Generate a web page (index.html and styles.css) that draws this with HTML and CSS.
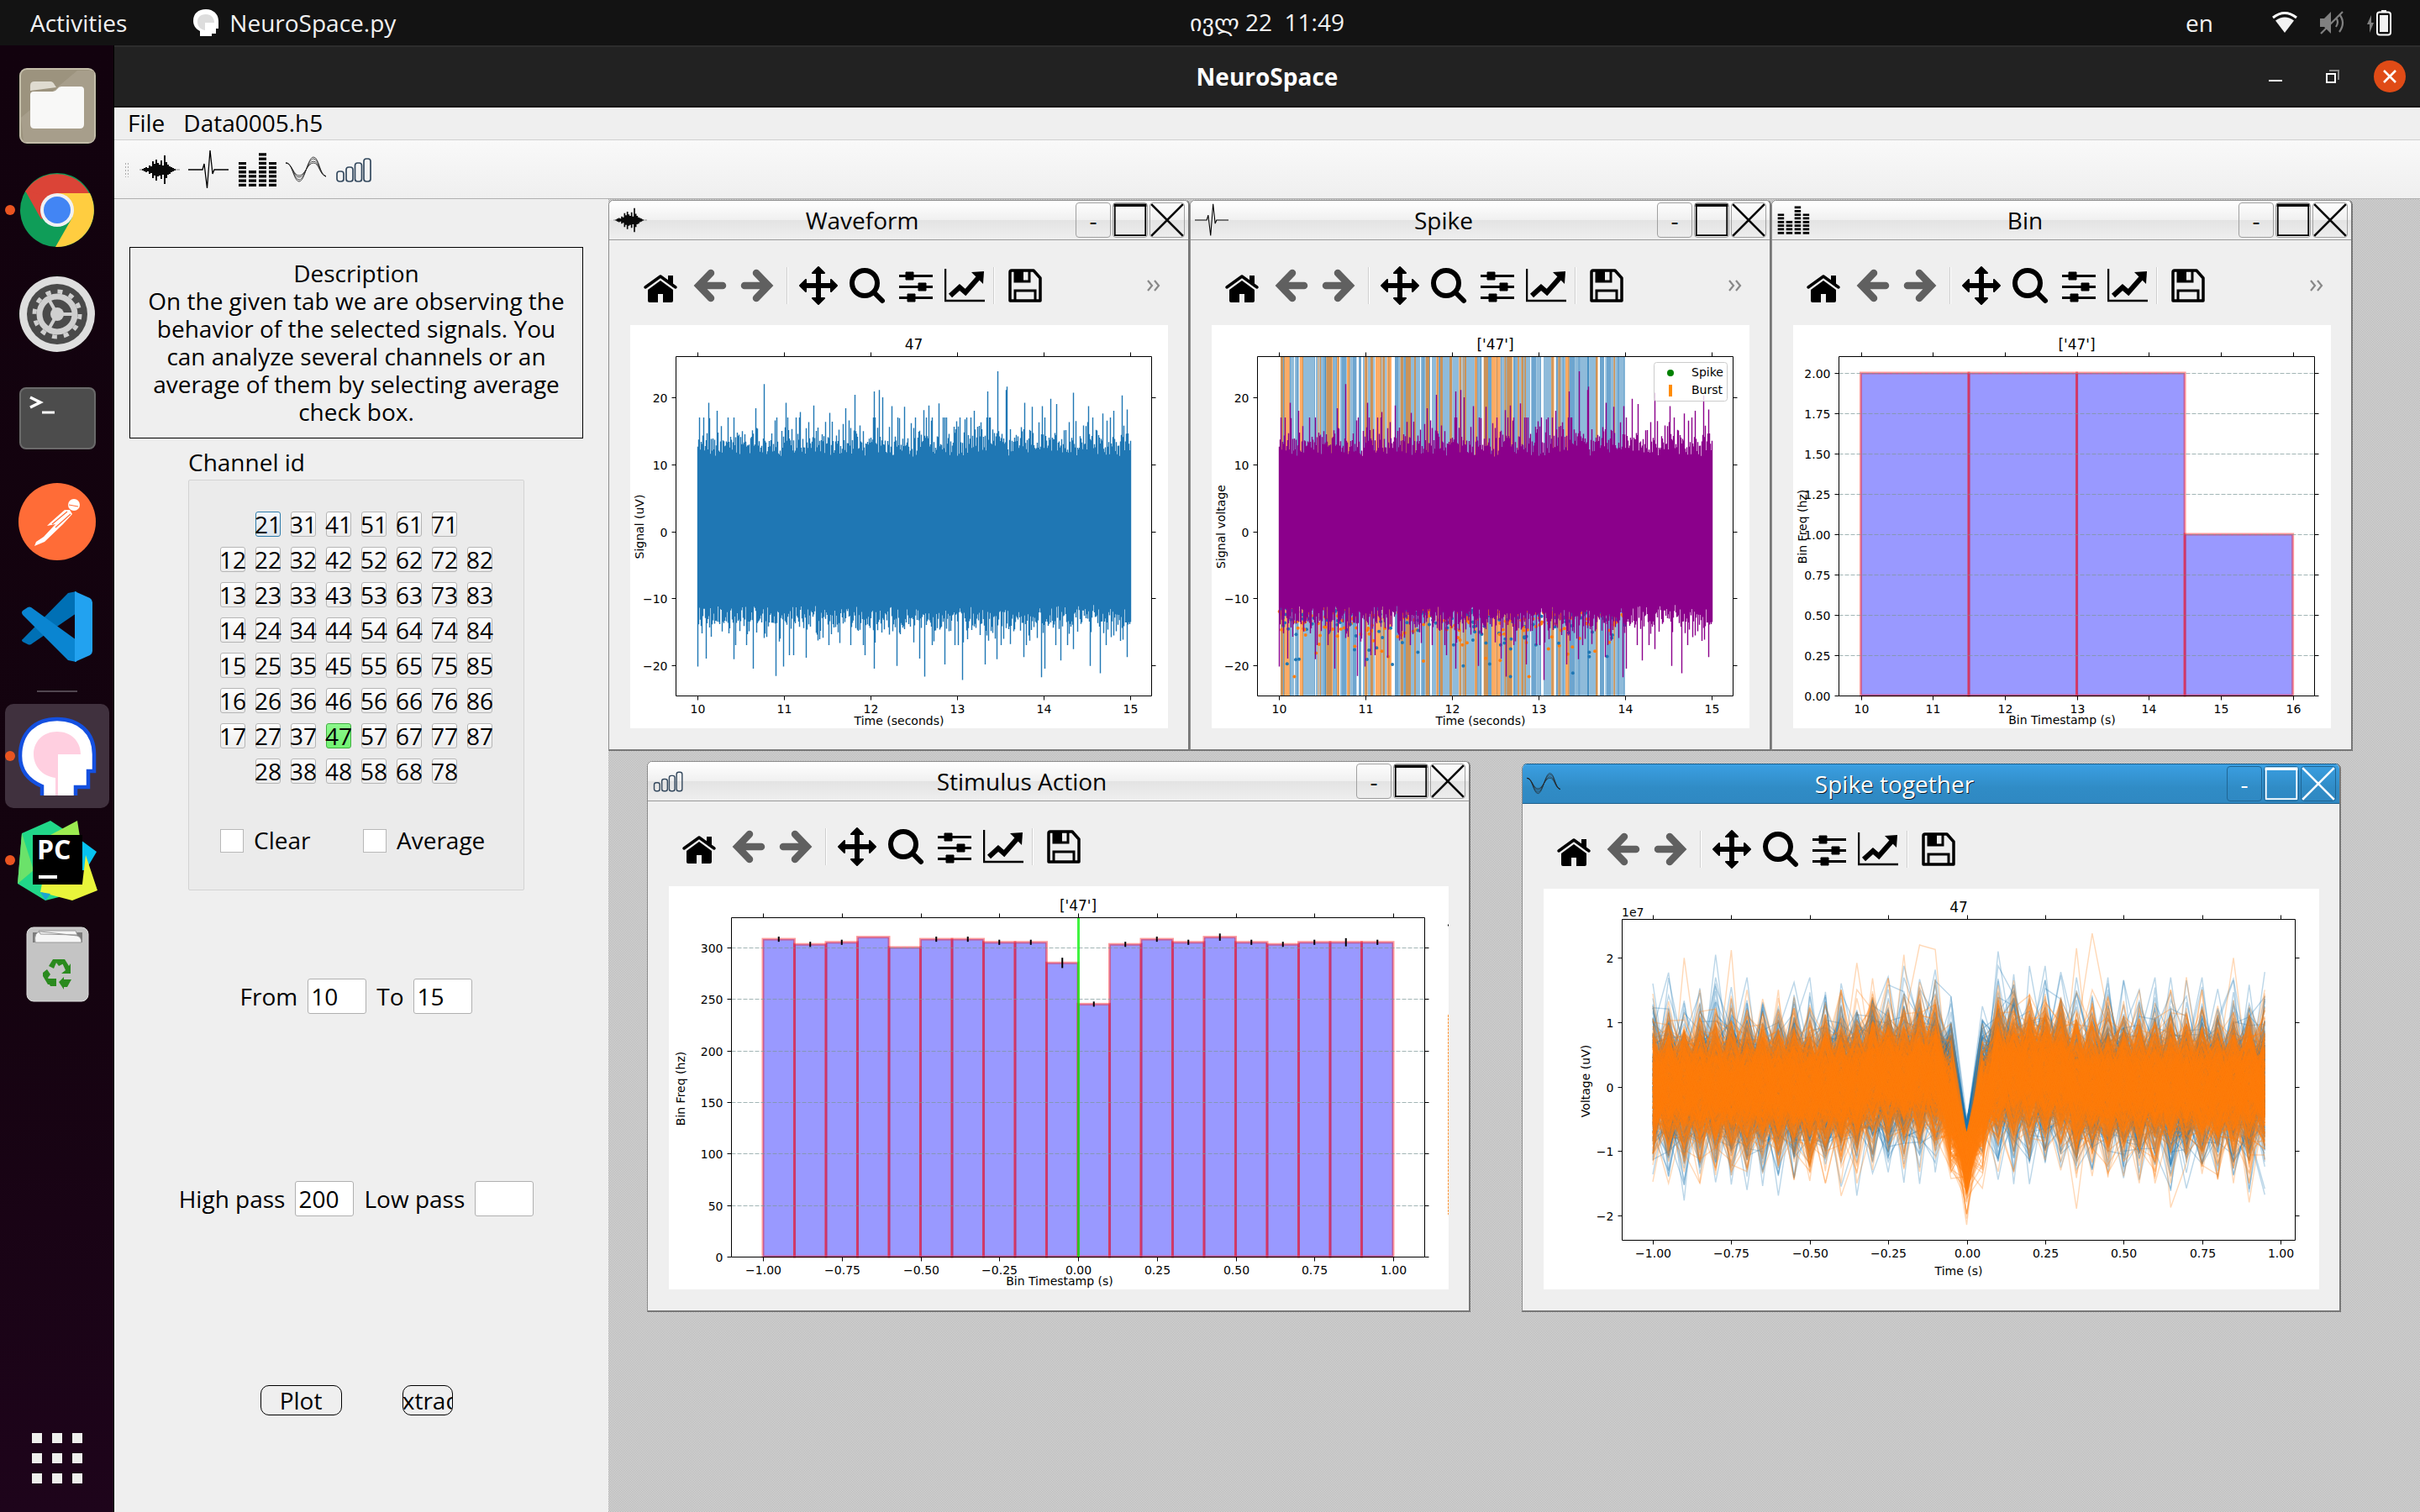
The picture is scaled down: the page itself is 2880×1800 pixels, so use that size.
FILE: index.html
```html
<!DOCTYPE html>
<html lang="en">
<head>
<meta charset="utf-8">
<title>NeuroSpace</title>
<link rel="stylesheet" href="styles.css">
</head>
<body>
<svg class="defs" aria-hidden="true">
  <symbol id="i-wave" viewBox="0 0 48 48"><path d="M0 24H48" stroke="#888" stroke-width="1"/><path d="M4 23v2M6 22v4M8 21v6M10 22v4M12 19v10M14 20v8M16 14v20M18 17v14M20 12v25M22 16v16M24 18v13M26 13v22M28 19v11M30 7v34M32 15v19M34 18v12M36 20v9M38 21v6M40 22v4M42 23v2" stroke="#0a0a0a" stroke-width="2"/></symbol>
  <symbol id="i-spike" viewBox="0 0 48 48"><path d="M0 24H17L19 17 22.500 46 26 1 29 29 31 24H48" fill="none" stroke="#000" stroke-width="1.300"/></symbol>
  <symbol id="i-bars" viewBox="0 0 48 48"><g stroke="#000" stroke-width="9" stroke-dasharray="3.300 1.900"><path d="M6.500 44V15"/><path d="M18.500 44V25"/><path d="M30.500 44V4"/><path d="M42.500 44V15"/></g></symbol>
  <symbol id="i-curves" viewBox="0 0 48 48"><g fill="none" stroke="#222" stroke-width=".8"><path d="M0 16C8 14 9 38 16 38S26 9 33 9 40 30 48 32"/><path d="M0 16C8 15 9 36 16 36S26 11 33 11 40 30 48 32"/><path d="M0 16C8 16 9 33 16 33S26 14 33 14 40 30 48 32"/><path d="M0 16C8 17 9 31 16 31S26 16 33 16 40 30 48 32"/></g></symbol>
  <symbol id="i-signal" viewBox="0 0 48 48"><g fill="none" stroke="#34495e" stroke-width="1.700"><rect x="3" y="26" width="8" height="12" rx="3"/><rect x="14" y="21" width="8" height="17" rx="3"/><rect x="24.500" y="16" width="8" height="22" rx="3"/><rect x="35" y="11" width="8" height="27" rx="3"/></g></symbol>
  <symbol id="i-home" viewBox="0 0 48 48"><path d="M33 12h6v14l-6-5z"/><path d="M6 26 24 13 42 26" fill="none" stroke="#000" stroke-width="3.500" stroke-linecap="round" stroke-linejoin="round"/><path d="M9 29 24 18 39 29V42q0 2-2 2H27V34H21V44H11q-2 0-2-2z"/></symbol>
  <symbol id="i-back" viewBox="0 0 48 48"><path d="M26 9 11.500 24 26 39M13 24H40" fill="none" stroke="#606060" stroke-width="8.500" stroke-linecap="round" stroke-linejoin="miter"/></symbol>
  <symbol id="i-forward" viewBox="0 0 48 48"><path d="M22 9 36.500 24 22 39M35 24H8" fill="none" stroke="#606060" stroke-width="8.500" stroke-linecap="round" stroke-linejoin="miter"/></symbol>
  <symbol id="i-move" viewBox="0 0 48 48"><path d="M8 24H40M24 8V40" stroke="#000" stroke-width="6"/><path d="M2 24 9 17V31zM46 24 39 17V31zM24 2 17 9H31zM24 46 17 39H31z" stroke="#000" stroke-width="2" stroke-linejoin="round"/></symbol>
  <symbol id="i-zoom" viewBox="0 0 48 48"><g fill="none" stroke="#000" stroke-width="6" stroke-linecap="round"><circle cx="21" cy="21" r="15"/><path d="M33 33 42 42"/></g></symbol>
  <symbol id="i-sliders" viewBox="0 0 48 48"><path d="M4 12.500H44M4 25.500H44M4 38.500H44" stroke="#000" stroke-width="3"/><path d="M12 8h9v9h-9zM27 21h9v9h-9zM14 34h9v9h-9z" stroke="#000" stroke-width="1"/></symbol>
  <symbol id="i-chart" viewBox="0 0 48 48"><path d="M1 4V42H48" fill="none" stroke="#000" stroke-width="2.500"/><path d="M7 36 18 26 25 32 40 15" fill="none" stroke="#000" stroke-width="6"/><path d="M32 8 47 7 46 22z"/></symbol>
  <symbol id="i-save" viewBox="0 0 48 48"><path d="M8 6H34L42 15V42H6V8q0-2 2-2z" fill="none" stroke="#000" stroke-width="3.500" stroke-linejoin="round"/><path d="M12 6V19H29V6M12 42V30H36V42" fill="none" stroke="#000" stroke-width="3"/><path d="M12 6h10v13h-10z"/></symbol>
  <symbol id="i-more" viewBox="0 0 18 14"><path d="M2 1 7 7 2 13M10 1 15 7 10 13" fill="none" stroke="#888" stroke-width="2.200"/></symbol>
  <symbol id="i-max" viewBox="0 0 34 34"><path d="M1.500 2V32.500H32.500V2" fill="none" stroke="currentColor" stroke-width="1.500"/><path d="M.5 2H33.500" stroke="currentColor" stroke-width="3"/></symbol>
  <symbol id="i-close" viewBox="0 0 34 34"><path d="M1 1 33 33M33 1 1 33" stroke="currentColor" stroke-width="2.200"/></symbol>
</svg>

<header class="topbar">
  <button class="activities">Activities</button>
  <button class="appmenu">
    <svg width="32" height="34" viewBox="0 0 32 34"><path d="M9 33V27C3 24 1 19 1 15 1 6 7 1 16 1S31 7 31 15V24H28V30H23V33z" fill="#fff"/><path d="M16 7C9 7 6 11 6 16S9 25 15 26V17H26C26 11 22 7 16 7z" fill="#ddd"/></svg>
    NeuroSpace.py</button>
  <time class="clock">ივლ 22&nbsp; 11:49</time>
  <div class="tray">
    <span>en</span>
    <svg class="wifi" width="32" height="28" viewBox="0 0 32 28"><path d="M2 8Q16-3 30 8" fill="none" stroke="#fff" stroke-width="3"/><path d="M5 11.500Q16 3.500 27 11.500L16 26z" fill="#f2f2f2"/></svg>
    <svg class="volume" width="30" height="30" viewBox="0 0 30 30"><g fill="none" stroke="#808080" stroke-width="2.200"><path d="M20 9Q24 14 20 20M24 5Q32 15 24 26M2 28 28 2"/></g><path d="M1 10H6L14 2V28L6 20H1z" fill="#808080"/></svg>
    <svg class="battery" width="30" height="32" viewBox="0 0 30 32"><path d="M6 7 1 18H4V28L9 16H6z" fill="#808080"/><rect x="13" y="3.500" width="16" height="27" rx="3" fill="none" stroke="#fff" stroke-width="2"/><path d="M18 1h6v2h-6zM16 7h10v20h-10z" fill="#f2f2f2"/></svg>
  </div>
</header>

<div class="screen">
<nav class="dock" aria-label="Dock">
  <button class="launcher" aria-label="Files"><svg width="96" height="96" viewBox="0 0 96 96"><rect x="4" y="4" width="89" height="88" rx="8" fill="#9c937e" stroke="#c3bda9" stroke-width="2"/><path d="M92 6V85q0 6-6 6H8L5 62 72 6z" fill="#a79e8b"/><path d="M16 30V24q0-5 5-5H40q3 0 5 4l2 3z" fill="#dfdbd0"/><path d="M16 35q0-4 4-4H43q3 0 5-3t5-3H76q4 0 4 4V70q0 5-5 5H21q-5 0-5-5z" fill="#f8f8f7"/></svg></button>
  <button class="launcher running" aria-label="Chrome"><svg width="96" height="96" viewBox="0 0 96 96"><circle cx="48" cy="48" r="44" fill="#0f9d58"/><path d="M48 48 10 26A44 44 0 0 1 86 28z" fill="#db4437"/><path d="M48 28H87A44 44 0 0 1 46 92L66 57z" fill="#ffcd40"/><path d="M48 48 29 59 10 25 30 30z" fill="#db4437"/><circle cx="48" cy="48" r="20" fill="#f1f1f1"/><circle cx="48" cy="48" r="16" fill="#4285f4"/></svg></button>
  <button class="launcher" aria-label="Settings"><svg width="96" height="96" viewBox="0 0 96 96"><circle cx="48" cy="48" r="45" fill="#dedede"/><circle cx="48" cy="48" r="36" fill="#4a4a4a"/><circle cx="48" cy="48" r="27" fill="none" stroke="#cfcfcf" stroke-width="5" stroke-dasharray="6 8.140"/><circle cx="48" cy="48" r="21" fill="none" stroke="#cfcfcf" stroke-width="7"/><path d="M48 48H66M48 48 39 32M48 48 39 64" stroke="#cfcfcf" stroke-width="4"/><circle cx="48" cy="48" r="8" fill="#cfcfcf"/></svg></button>
  <button class="launcher" aria-label="Terminal"><svg width="96" height="96" viewBox="0 0 96 96"><rect x="4" y="12" width="89" height="72" rx="7" fill="#4c4c4c" stroke="#6a6a6a" stroke-width="2"/><path d="M16 23 28 29 16 35" fill="none" stroke="#fff" stroke-width="3.500"/><path d="M30 41H45" stroke="#fff" stroke-width="3"/></svg></button>
  <button class="launcher" aria-label="Postman"><svg width="96" height="96" viewBox="0 0 96 96"><circle cx="48" cy="47" r="46" fill="#ff6c37"/><circle cx="68" cy="27" r="7" fill="#fff"/><path d="M63 33 66 38 55 50 33 71 21 76 23 71 32 65 46 50 36 52 40 48 57 33z" fill="#fff"/><path d="M60 35 42 50M64 38 46 54M62 27 73 29" stroke="#ff6c37" stroke-width="1.200"/></svg></button>
  <button class="launcher" aria-label="Visual Studio Code"><svg width="96" height="96" viewBox="0 0 96 96"><path d="M7 63 61 8 71 6V32L17 69q-2 1-4 0L7 66q-2-2 0-3z" fill="#0070b5"/><path d="M7 29 13 25q2-1 4 0L71 64V90L61 88 7 34q-2-3 0-5z" fill="#0a85d1"/><path d="M69 6 87 14q3 2 3 5V77q0 3-3 5L69 90V6z" fill="#22a2f0"/></svg></button>
  <hr class="dock-rule">
  <button class="launcher running active" aria-label="NeuroSpace"><svg width="96" height="96" viewBox="0 0 96 96"><path d="M30 95V84C11 76 4 63 4 48 4 20 22 4 48 4S92 20 92 46V66H85V85H70V95" fill="#fff" stroke="#1450e0" stroke-width="4.500"/><path d="M46 95V74C30 72 20 60 20 46 20 30 32 19 48 19S76 30 76 46H49V95z" fill="#ffcfe0"/></svg></button>
  <button class="launcher running" aria-label="PyCharm"><svg width="96" height="96" viewBox="0 0 96 96"><path d="M6 16 40 1 60 14 50 92 34 96 1 76z" fill="#21d789"/><path d="M6 16 1 76 20 60z" fill="#6be26a"/><path d="M40 18 72 1 75 20z" fill="#9beb50"/><path d="M76 24 95 38 82 60H60z" fill="#07c3f2"/><path d="M82 42 96 84 66 96 28 86 30 76H78z" fill="#e9f53b"/><path d="M40 88 28 86 34 96z" fill="#1aa6d0"/><rect x="19" y="18" width="59" height="59" fill="#000"/><text x="24" y="47" class="pc">PC</text><path d="M26 68H48" stroke="#fff" stroke-width="4"/></svg></button>
  <button class="launcher" aria-label="Trash"><svg width="96" height="96" viewBox="0 0 96 96"><rect x="12" y="4" width="73" height="88" rx="8" fill="#c4c4c4" stroke="#ddd"/><path d="M19 10H78V22H19z" fill="#7c7c7c"/><path d="M22 22Q20 10 28 9L72 14Q77 16 77 22zM26 8H70L72 13 28 12z" fill="#f6f6f6" stroke="#999"/><g fill="#2a8a1e"><path d="M38 50 43 42H53L56 47 50 50 47 46 44 53z"/><path d="M52 42H57L62 50 64 47V59H53L58 55z"/><path d="M31 58 36 54 40 60 37 64 42 72H37L31 62z"/><path d="M35 65H47V74H40z"/><path d="M50 69 56 63V66H65L60 75H56V78z"/></g></svg></button>
  <button class="launcher apps" aria-label="Show applications"><svg width="60" height="60" viewBox="0 0 60 60"><g stroke="#eeeeec" stroke-width="12" stroke-dasharray="12 12"><path d="M0 6H60"/><path d="M0 30H60"/><path d="M0 54H60"/></g></svg></button>
</nav>

<main class="app">
  <header class="titlebar">
    <h1>NeuroSpace</h1>
    <div class="frame-controls">
      <button aria-label="Minimize"><svg width="20" height="20" viewBox="0 0 20 20"><path d="M2 15H18" stroke="#fff" stroke-width="2"/></svg></button>
      <button aria-label="Restore"><svg width="20" height="20" viewBox="0 0 20 20"><path d="M6 3H17V14" fill="none" stroke="#8a8a8a" stroke-width="2"/><path d="M3 7H13V17H3z" fill="none" stroke="#fff" stroke-width="2"/></svg></button>
      <button class="quit" aria-label="Close"><svg width="16" height="16" viewBox="0 0 16 16"><path d="M1 1 15 15M15 1 1 15" stroke="#fff" stroke-width="2.600"/></svg></button>
    </div>
  </header>
  <nav class="menubar"><button>File</button><button>Data0005.h5</button></nav>
  <div class="toolbar">
    <span class="grip"></span>
    <button aria-label="Waveform"><svg class="icon"><use href="#i-wave"/></svg></button>
    <button aria-label="Spike"><svg class="icon"><use href="#i-spike"/></svg></button>
    <button aria-label="Bin"><svg class="icon"><use href="#i-bars"/></svg></button>
    <button aria-label="Spike together"><svg class="icon"><use href="#i-curves"/></svg></button>
    <button aria-label="Stimulus action"><svg class="icon"><use href="#i-signal"/></svg></button>
  </div>

  <div class="workspace">
  <aside class="panel">
    <section class="description"><h2>Description</h2><p>On the given tab we are observing the behavior of the selected signals. You can analyze several channels or an average of them by selecting average check box.</p></section>
    <section class="channels">
      <h2>Channel id</h2>
      <div class="channel-box">
        <div class="channel-grid">
          <i></i><button class="focus">21</button><button>31</button><button>41</button><button>51</button><button>61</button><button>71</button><i></i>
          <button>12</button><button>22</button><button>32</button><button>42</button><button>52</button><button>62</button><button>72</button><button>82</button>
          <button>13</button><button>23</button><button>33</button><button>43</button><button>53</button><button>63</button><button>73</button><button>83</button>
          <button>14</button><button>24</button><button>34</button><button>44</button><button>54</button><button>64</button><button>74</button><button>84</button>
          <button>15</button><button>25</button><button>35</button><button>45</button><button>55</button><button>65</button><button>75</button><button>85</button>
          <button>16</button><button>26</button><button>36</button><button>46</button><button>56</button><button>66</button><button>76</button><button>86</button>
          <button>17</button><button>27</button><button>37</button><button class="selected">47</button><button>57</button><button>67</button><button>77</button><button>87</button>
          <i></i><button>28</button><button>38</button><button>48</button><button>58</button><button>68</button><button>78</button><i></i>
        </div>
        <div class="checks">
          <label><input type="checkbox"> Clear</label>
          <label><input type="checkbox"> Average</label>
        </div>
      </div>
    </section>
    <div class="fields range">
      <label for="from">From</label><input id="from" type="text" value="10">
      <label for="to">To</label><input id="to" type="text" value="15">
    </div>
    <div class="fields">
      <label for="high">High pass</label><input id="high" type="text" value="200">
      <label for="low">Low pass</label><input id="low" type="text">
    </div>
    <div class="actions"><button class="plot-btn">Plot</button><button class="extract-btn"><span>Extract</span></button></div>
  </aside>

  <div class="mdi">
    <svg class="backdrop" aria-hidden="true"><defs><pattern id="dither" width="2" height="2" patternUnits="userSpaceOnUse"><path d="M0 0h2v2h-2z" fill="#efefef"/><path d="M0 0h1v1h-1zM1 1h1v1h-1z" fill="#a0a0a0"/></pattern></defs><rect width="100%" height="100%" fill="url(#dither)"/></svg>
    <section class="window w-wave" data-title="Waveform" data-icon="wave" data-more="1"><svg class="plot" id="plot-wave" viewBox="0 0 640 480"></svg></section>
    <section class="window w-spike" data-title="Spike" data-icon="spike" data-more="1"><svg class="plot" id="plot-spike" viewBox="0 0 640 480"></svg></section>
    <section class="window w-bin" data-title="Bin" data-icon="bars" data-more="1"><svg class="plot" id="plot-bin" viewBox="0 0 640 480"></svg></section>
    <section class="window w-stim" data-title="Stimulus Action" data-icon="signal"><svg class="plot" id="plot-stim" viewBox="0 0 928 480"></svg></section>
    <section class="window w-together current" data-title="Spike together" data-icon="curves"><svg class="plot" id="plot-together" viewBox="0 0 923 477"></svg></section>
  </div>
  </div>
</main>
</div>
<script src="plots.js"></script>
</body>
</html>
```
FILE: styles.css
```css
* { box-sizing: border-box; }
body {
  margin: 0;
  min-height: 100vh;
  display: flex;
  flex-direction: column;
  font-family: "Open Sans", "Noto Sans", "DejaVu Sans", sans-serif;
  font-size: 28px;
  line-height: 33px;
  color: #000;
  background: #131313;
}
button, input { font: inherit; color: inherit; }
button { margin: 0; padding: 0; border: 0; background: none; }
h1, h2, p { margin: 0; font: inherit; }
.defs { position: absolute; width: 0; height: 0; }

/* system bar */
.topbar {
  position: relative;
  display: flex;
  align-items: center;
  height: 54px;
  padding: 0 34px 0 36px;
  color: #f2f2f2;
  background: #131313;
}
.appmenu { display: flex; align-items: center; gap: 12px; margin-left: 78px; }
.clock { position: absolute; left: 136px; right: 0; top: 10px; width: max-content; margin: auto; }
.tray { display: flex; align-items: center; margin-left: auto; }
.wifi { margin-left: 69px; }
.volume { margin-left: 25px; }
.battery { margin-left: 26px; }

.screen { flex: 1; display: flex; }

/* dock */
.dock {
  width: 136px;
  flex: none;
  display: flex;
  flex-direction: column;
  align-items: center;
  padding: 10px 6px 2px;
  border-right: 1px solid #000;
  background: linear-gradient(#12020e, #14030f 60%, #1e041b);
}
.launcher {
  position: relative;
  width: 124px;
  height: 124px;
  display: grid;
  place-items: center;
  border-radius: 10px;
}
.launcher.active { background: #40313e; }
.running::before {
  content: "";
  position: absolute;
  left: 0;
  top: 56px;
  width: 12px;
  height: 12px;
  border-radius: 50%;
  background: #e95420;
}
.dock-rule { width: 48px; height: 2px; margin: 14px 0; border: 0; background: #514650; }
.launcher.apps { margin-top: auto; }
.pc { font: bold 32px "Open Sans", sans-serif; fill: #fff; }

/* application frame */
.app { flex: 1; min-width: 0; display: flex; flex-direction: column; }
.titlebar {
  display: grid;
  grid-template-columns: 1fr auto 1fr;
  align-items: center;
  height: 74px;
  border-top: 2px solid #2d2d2d;
  border-bottom: 2px solid #171313;
  background: #222;
  color: #fff;
}
.titlebar h1 { grid-column: 2; font-weight: 700; }
.frame-controls { display: flex; align-items: center; justify-content: flex-end; gap: 48px; padding-right: 17px; }
.frame-controls svg { display: block; }
.quit { width: 38px; height: 38px; display: grid; place-items: center; margin-left: -9px; border-radius: 50%; background: #e04b16; }
.menubar { display: flex; gap: 22px; height: 38px; padding: 0 16px 2px; background: #efefef; }
.toolbar {
  display: flex;
  align-items: center;
  gap: 10px;
  height: 71px;
  padding: 0 12px;
  border-top: 1px solid #d0d0d0;
  border-bottom: 1px solid #b0b0b0;
  background: linear-gradient(#f9f9f9, #efefef);
}
.grip { width: 6px; height: 18px; margin-right: 2px; background: radial-gradient(#aaa 25%, transparent 30%) 0 0 / 3px 4px; }
.icon { display: block; width: 48px; height: 48px; }
.workspace { flex: 1; display: flex; }

/* control panel */
.panel {
  width: 588px;
  flex: none;
  display: flex;
  flex-direction: column;
  align-items: center;
  padding: 57px 30px 20px 18px;
  background: #efefef;
}
.description { align-self: stretch; padding: 14px 18px; border: 1px solid #000; text-align: center; }
.channels { width: 400px; padding-top: 12px; }
.channel-box { height: 489px; margin-top: 4px; padding: 37px; border: 1px solid #d3d3d3; border-radius: 2px; background: #ebebeb; }
.channel-grid { display: grid; grid-template-columns: repeat(8, 30px); gap: 12px; }
.channel-grid button {
  width: 30px;
  height: 30px;
  display: flex;
  align-items: center;
  justify-content: center;
  border: 1px solid #b5b5b5;
  border-radius: 3px;
  background: linear-gradient(#fff, #ececec);
}
.channel-grid .focus { border-color: #2f7cab; background: linear-gradient(#f6f9fc, #dde5ec); }
.channel-grid .selected { border-color: #3faf3f; background: linear-gradient(#8cf88c, #72f272); }
.checks { display: grid; grid-template-columns: 170px auto; margin-top: 51px; }
.checks label { display: flex; align-items: center; gap: 12px; }
.checks input { appearance: none; width: 28px; height: 28px; margin: 0; border: 1px solid #b8b8b8; background: #fff; }
.fields { display: flex; align-items: center; gap: 12px; margin-top: 199px; }
.fields.range { margin-top: 105px; }
.fields input { width: 70px; height: 42px; padding: 0 3px; border: 1px solid #b0b0b0; border-radius: 3px; background: #fff; }
.actions { display: flex; gap: 72px; margin-top: 201px; }
.actions button { height: 36px; display: flex; align-items: center; justify-content: center; border: 1px solid #000; border-radius: 10px; overflow: hidden; }
.plot-btn { width: 97px; }
.extract-btn { width: 60px; }

/* document area */
.mdi { position: relative; flex: 1; background: #c8c8c8; }
.backdrop { position: absolute; inset: 0; width: 100%; height: 100%; shape-rendering: crispEdges; }
.window {
  position: absolute;
  border: 1px solid #8c8c8c;
  border-right: 2px solid #777;
  border-bottom: 2px solid #777;
  border-radius: 6px 6px 0 0;
  background: #efefef;
}
.w-wave { left: 0; top: 1px; width: 692px; }
.w-spike { left: 692px; top: 1px; width: 692px; }
.w-bin { left: 1384px; top: 1px; width: 692px; }
.w-stim { left: 46px; top: 669px; width: 980px; }
.w-together { left: 1087px; top: 672px; width: 975px; }
.window-title {
  display: flex;
  align-items: center;
  gap: 2px;
  height: 47px;
  padding: 0 4px 0 5px;
  border-bottom: 1px solid #999;
  border-radius: 5px 5px 0 0;
  background: linear-gradient(#fff, #f0f0f0 50%, #e3e3e3 50%, #efefef);
}
.window-title .icon { width: 40px; height: 40px; }
.window-title h2 { flex: 1; padding-left: 2px; text-align: center; }
.window-title button {
  width: 42px;
  height: 42px;
  display: grid;
  place-items: center;
  border: 1px solid #a0a0a0;
  border-radius: 4px;
}
.window-title button svg { width: 32px; height: 32px; }
.current { border-color: #1c5f8c #777 #777 #8c8c8c; }
.current .window-title { color: #fff; border-bottom-color: #1f5f8b; background: linear-gradient(#3b9fe2, #308cc6 60%, #2f88c2); }
.current .window-title h2 { text-shadow: 1px 1px #10202c; }
.current .window-title button { border-color: #1f6594; }
.plot-tools { display: flex; align-items: center; gap: 10px; height: 101px; padding: 7px 32px 0 37px; }
.plot-tools hr { width: 4px; height: 44px; margin: 0; border: 0; border-left: 1px solid #cfcfcf; box-shadow: inset 1px 0 #fff; }
.plot-tools .more { margin-left: auto; }
.plot-tools .more svg { display: block; width: 18px; height: 14px; }
.plot { display: block; width: calc(100% - 49px); margin: 0 24px 25px 25px; background: #fff; font: 14px "DejaVu Sans", sans-serif; }
.plot .heading { font-size: 17px; }
.plot .mid { text-anchor: middle; }
.plot .end { text-anchor: end; }
.plot .frame { fill: none; stroke: #000; stroke-width: 1; }
.plot .bar { fill: rgba(0, 0, 255, .4); stroke: rgba(255, 0, 0, .4); stroke-width: 3; }
.plot .grid { stroke: #7a9696; stroke-opacity: .7; stroke-width: 1; stroke-dasharray: 5 2; }
```
FILE: plots.js
```js
const NS = 'http://www.w3.org/2000/svg';

/* window chrome shared by every plot window */
const use = (id, cls = 'icon') => `<svg class="${cls}"><use href="#i-${id}"/></svg>`;
const tool = (id, label, cls = '') => `<button class="${cls}" aria-label="${label}">${use(id)}</button>`;
document.querySelectorAll('.window').forEach(w => {
  w.insertAdjacentHTML('afterbegin',
    `<header class="window-title">${use(w.dataset.icon)}<h2>${w.dataset.title}</h2>
      <button aria-label="Minimize">-</button>
      <button aria-label="Maximize">${use('max')}</button>
      <button aria-label="Close">${use('close')}</button></header>
    <div class="plot-tools">${tool('home', 'Home')}${tool('back', 'Back')}${tool('forward', 'Forward')}<hr>
      ${tool('move', 'Pan')}${tool('zoom', 'Zoom')}${tool('sliders', 'Subplots')}${tool('chart', 'Customize')}<hr>
      ${tool('save', 'Save')}${w.dataset.more ? tool('more', 'More', 'more') : ''}</div>`);
});

/* seeded generator, so that a reload draws the same traces */
function rng(seed) {
  return () => {
    seed = (seed + 0x6D2B79F5) | 0;
    let t = Math.imul(seed ^ (seed >>> 15), 1 | seed);
    t = (t + Math.imul(t ^ (t >>> 7), 61 | t)) ^ t;
    return ((t ^ (t >>> 14)) >>> 0) / 4294967296;
  };
}

function add(svg, tag, attrs, text) {
  const el = document.createElementNS(NS, tag);
  for (const k in attrs) el.setAttribute(k, attrs[k]);
  if (text !== undefined) el.textContent = text;
  svg.appendChild(el);
  return el;
}

function axes(svg, o) {
  const { l, t, r, b } = o.box;
  let d = '';
  o.xt.forEach(([v, s]) => {
    const x = Math.round(o.x(v)) + .5;
    d += `M${x} ${b}v5M${x} ${t}v-5`;
    add(svg, 'text', { x, y: b + 20, class: 'mid' }, s);
  });
  o.yt.forEach(([v, s]) => {
    const y = Math.round(o.y(v)) + .5;
    d += `M${l} ${y}h-5M${r} ${y}h5`;
    add(svg, 'text', { x: l - 10, y: y + 5, class: 'end' }, s);
  });
  add(svg, 'path', { class: 'frame', d: d + `M${l} ${t}H${r}V${b}H${l}z` });
  add(svg, 'text', { x: (l + r) / 2, y: t - 9, class: 'mid heading' }, o.title);
  add(svg, 'text', { x: o.xl[1], y: o.xl[2], class: 'mid' }, o.xl[0]);
  add(svg, 'text', { class: 'mid', transform: `translate(${o.yl[1]} ${o.yl[2]}) rotate(-90)` }, o.yl[0]);
}

/* raw signal, one min/max column for each pixel */
const box = { l: 54.5, t: 37.5, r: 620.5, b: 441.5 };
const sx = v => 80 + (v - 10) * 103;
const sy = v => 245.5 - v * 7.97;
const highs = [[.02,17],[.13,19.2],[.22,18],[.67,18.4],[.77,22],[1.02,19.2],[1.18,17.8],[1.34,18.8],[1.52,17.7],[1.71,18.4],[1.82,20.4],[2.04,20.9],[2.1,21.1],[2.14,20],[2.24,18.7],[2.39,18.6],[2.61,18.1],[2.67,18.8],[2.79,19.1],[3.19,18],[3.35,20.9],[3.47,23.9],[3.56,21.1],[3.57,21.6],[3.78,19.2],[3.86,18.6],[3.98,18.7],[4.08,19.8],[4.15,19],[4.34,20.7],[4.51,18.7],[4.68,17.6],[4.81,18],[4.9,20.3],[4.96,18.2]];
const lows = [[0,20.2],[.1,19],[.42,19.1],[.64,20.5],[.9,21.6],[.99,20.2],[1.06,18.5],[1.11,18.5],[1.25,18.9],[1.93,18.5],[2.04,20.5],[2.3,20.1],[2.56,19],[2.62,21.7],[2.85,19.9],[3.06,22.2],[3.32,19.9],[3.46,19.1],[3.77,18.8],[3.97,21.8],[4.01,20.5],[4.19,19.3],[4.34,17.6],[4.53,20.1],[4.65,21.2],[4.96,18.8]];
const rand = rng(47);
const cols = Array.from({ length: 516 }, () => {
  const e = () => Math.min(17, 11 + rand() * 2.4 - Math.log(1 - rand()) * 1.4);
  return [e(), e()];
});
highs.forEach(([t, v]) => { cols[Math.round(t * 103)][0] = v; });
lows.forEach(([t, v]) => { cols[Math.round(t * 103)][1] = v; });
const trace = cols.map(([a, z], i) => `M${80.5 + i} ${sy(a).toFixed(1)}V${sy(-z).toFixed(1)}`).join('');
const secs = [10, 11, 12, 13, 14, 15].map(v => [v, v]);
const volts = [20, 10, 0, -10, -20].map(v => [v, String(v).replace('-', '−')]);

const wave = document.getElementById('plot-wave');
add(wave, 'path', { d: trace, stroke: '#1f77b4', 'stroke-width': 1.4 });
axes(wave, { box, x: sx, y: sy, xt: secs, yt: volts, title: '47', xl: ['Time (seconds)', 320, 476], yl: ['Signal (uV)', 16, 240] });

/* burst spans: start, end (thirds of a pixel from x = 73), shade */
const shades = { b: '#8fbbda', m: '#6da5cf', d: '#4890c2', t: '#cb9359', o: '#ffab63' };
const spans = '27 36 t,36 39 m,39 44 t,44 58 o,58 60 t,60 63 m,63 75 b,78 82 b,82 92 m,95 106 o,105 108 t,108 150 b,147 150 m,153 160 b,160 164 t,164 167 b,167 171 t,171 186 b,181 185 m,186 190 d,190 210 t,210 214 o,214 228 m,218 224 b,228 237 o,232 235 t,240 244 b,244 262 m,262 264 b,264 270 o,270 275 t,275 284 b,284 298 m,306 315 m,321 327 b,327 338 o,329 336 t,338 348 b,348 358 t,358 364 b,366 382 o,382 388 t,388 391 b,391 400 t,400 407 b,407 423 o,412 416 t,435 447 m,447 455 b,455 466 t,466 474 m,474 492 t,492 504 b,504 510 t,510 525 b,528 545 b,532 541 m,545 558 t,558 561 m,567 583 b,583 591 o,585 588 t,591 597 m,597 606 t,606 630 b,630 640 t,640 664 b,664 673 o,666 671 t,673 677 b,677 690 t,680 683 b,690 720 b,720 729 o,723 727 t,729 745 m,733 738 b,752 768 t,768 780 m,780 797 o,797 801 t,801 812 o,812 818 m,818 826 b,826 840 t,832 835 b,840 852 t,852 856 o,858 874 m,866 870 b,874 880 o,875 879 t,880 886 b,886 903 t,894 898 b,903 918 b,922 940 m,940 952 b,952 957 m,966 994 b,994 1004 o,994 1001 t,1010 1018 m,1018 1030 t,1025 1028 b,1030 1044 b,1034 1038 m,1044 1058 o,1054 1058 t,1058 1078 m,1078 1122 b,1090 1096 m,1122 1129 d,1129 1152 b,1152 1160 o,1152 1158 t,1167 1182 m,1186 1190 b,1190 1208 m,1208 1216 b,1216 1222 t,1222 1256 b,1230 1236 m,1252 1256 m';
const spike = document.getElementById('plot-spike');
spans.split(',').forEach(s => {
  const [a, z, k] = s.split(' ');
  add(spike, 'rect', { x: (73 + a / 3).toFixed(1), y: 38, width: ((z - a) / 3).toFixed(1), height: 403, fill: shades[k] });
});
for (let i = 0; i < 420; i++) {
  const v = 11.5 + Math.min(10.2, -Math.log(1 - rand()) * 2.2);
  add(spike, 'circle', { cx: (sx(10 + rand() * 4)).toFixed(1), cy: sy(-v).toFixed(1), r: 2, fill: rand() < .5 ? '#1f77b4' : '#ff7f0e' });
}
add(spike, 'path', { d: trace, stroke: '#8b008b', 'stroke-width': 1.4 });
axes(spike, { box, x: sx, y: sy, xt: secs, yt: volts, title: "['47']", xl: ['Time (seconds)', 320, 476], yl: ['Signal voltage', 16, 240] });
add(spike, 'rect', { x: 526.5, y: 44.5, width: 87, height: 46, rx: 3, fill: '#fff', 'fill-opacity': .8, stroke: '#ccc' });
add(spike, 'circle', { cx: 546, cy: 57, r: 4, fill: '#008000' });
add(spike, 'rect', { x: 544, y: 71, width: 4, height: 14, fill: '#ff8c00' });
add(spike, 'text', { x: 571, y: 61 }, 'Spike');
add(spike, 'text', { x: 571, y: 82 }, 'Burst');

function grid(svg, { l, r }, ys) {
  ys.forEach(y => add(svg, 'path', { class: 'grid', d: `M${l} ${Math.round(y) + .5}H${r}` }));
}

/* bin histogram */
const bin = document.getElementById('plot-bin');
const bx = v => 80.5 + (v - 10) * 85.7;
const by = v => 441 - v * 192;
[[10, 2], [11.5, 2], [13, 2], [14.5, 1]].forEach(([v, h]) =>
  add(bin, 'rect', { class: 'bar', x: bx(v), y: by(h), width: 128.5, height: 441 - by(h) }));
const quarters = [0, .25, .5, .75, 1, 1.25, 1.5, 1.75, 2];
grid(bin, box, quarters.map(by));
axes(bin, { box, x: bx, y: by, xt: [10, 11, 12, 13, 14, 15, 16].map(v => [v, v]), yt: quarters.map(v => [v, v.toFixed(2)]), title: "['47']", xl: ['Bin Timestamp (s)', 320, 475], yl: ['Bin Freq (hz)', 16, 240] });

/* stimulus histogram with error bars */
const stim = document.getElementById('plot-stim');
const box2 = { l: 74.5, t: 37.5, r: 899.5, b: 441.5 };
const tx = v => 487 + v * 375;
const ty = v => 441 - v * 1.227;
const rates = [[308,2.5],[303,2.5],[305,2.5],[310,0],[300,0],[308,2.5],[308,2.5],[305,2.5],[305,2.5],[285,5],[245,2.5],[303,2.5],[308,2.5],[305,2.5],[310,3.5],[305,2.5],[303,2.5],[305,2.5],[305,4],[305,2.5]];
rates.forEach(([h], i) => add(stim, 'rect', { class: 'bar', x: tx(-1 + i / 10), y: ty(h), width: 37.5, height: 441 - ty(h) }));
const hz = [0, 50, 100, 150, 200, 250, 300];
grid(stim, box2, hz.map(ty));
rates.forEach(([h, e], i) => e && add(stim, 'path', { d: `M${tx(-.95 + i / 10)} ${ty(h - e)}V${ty(h + e)}`, stroke: '#000', 'stroke-width': 2 }));
add(stim, 'path', { d: 'M487.500 38V441', stroke: '#00f000', 'stroke-opacity': .75, 'stroke-width': 3 });
const steps = [-1, -.75, -.5, -.25, 0, .25, .5, .75, 1].map(v => [v, v.toFixed(2).replace('-', '−')]);
axes(stim, { box: box2, x: tx, y: ty, xt: steps, yt: hz.map(v => [v, v]), title: "['47']", xl: ['Bin Timestamp (s)', 465, 475], yl: ['Bin Freq (hz)', 19, 241] });
add(stim, 'path', { d: 'M927.500 153V391', stroke: '#ff7f0e', 'stroke-opacity': .8, 'stroke-dasharray': '3 1' });
add(stim, 'path', { d: 'M927.500 45.500v2', stroke: '#000' });

/* spike waveforms, overlaid */
const tog = document.getElementById('plot-together');
const ux = v => 503.5 + v * 373.5;
const uy = v => 235.5 - v * 76.6;
const box3 = { l: 93.5, t: 36.5, r: 894.5, b: 418.5 };
const gauss = () => Math.sqrt(-2 * Math.log(1 - rand())) * Math.cos(2 * Math.PI * rand());
function sweep(first) {
  return Array.from({ length: 40 }, (_, i) => {
    const k = i - 20, g = Math.max(-3.2, Math.min(3.2, gauss()));
    if (k === 0) return first ? -.66 + g * .06 : Math.max(-2.15, -.72 - Math.abs(g) * .46);
    if (Math.abs(k) === 1) return (first ? .12 : -.3) + g * .4;
    const lift = Math.abs(k) < 7 ? .18 : 0;
    return lift + g * (first ? .53 : .47);
  });
}
const extremes = { 3: [5, 2.12], 9: [2, 2], 12: [17, 2.2], 13: [16, 2.05], 15: [27, 2.15], 16: [28, 2.38], 19: [37, 2], 22: [27, -1.9], 25: [33, -1.88], 29: [38, -1.8], 32: [13, 1.92], 35: [23, 1.65], 38: [34, 1.7], 41: [12, -1.7] };
const firstExtremes = { 3: [4, 2.05], 6: [22, 2.1], 9: [2, -1.77], 12: [39, -1.68], 15: [1, 1.77], 18: [39, 1.78], 21: [34, 1.65] };
function draw(n, color, first, peaks) {
  for (let i = 0; i < n; i++) {
    const p = sweep(first);
    if (peaks[i]) p[peaks[i][0]] = peaks[i][1];
    if (!first && i === 12) p[18] = 2.13;
    add(tog, 'polyline', { points: p.map((v, j) => `${ux(-1 + j * .05).toFixed(1)},${uy(v).toFixed(1)}`).join(' '), fill: 'none', stroke: color, 'stroke-opacity': .3, 'stroke-width': 1.4 });
  }
}
draw(320, '#1f77b4', true, firstExtremes);
draw(480, '#ff7f0e', false, extremes);
axes(tog, { box: box3, x: ux, y: uy, xt: steps, yt: [[2, '2'], [1, '1'], [0, '0'], [-1, '−1'], [-2, '−2']], title: '47', xl: ['Time (s)', 494, 460], yl: ['Voltage (uV)', 55, 229] });
add(tog, 'text', { x: 93, y: 33 }, '1e7');
```
